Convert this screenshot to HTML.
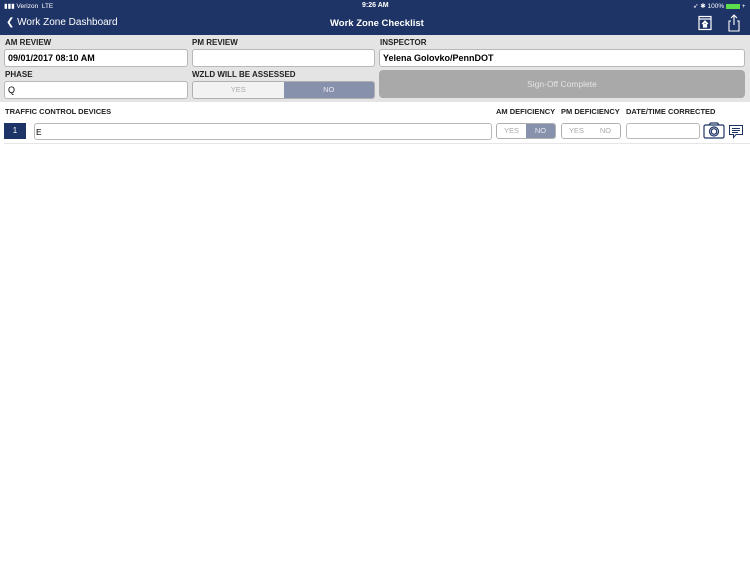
<!DOCTYPE html>
<html><head><meta charset="utf-8"><style>
*{box-sizing:border-box;margin:0;padding:0}
body{width:750px;height:562px;background:#fff;font-family:"Liberation Sans",sans-serif;position:relative;overflow:hidden}
.a{position:absolute}
.nav{left:0;top:0;width:750px;height:35px;background:#1e3466;color:#fff}
.gray{left:0;top:35px;width:750px;height:67px;background:#e4e4e4}
.lbl{font-size:8px;font-weight:bold;color:#222}
.in{background:#fff;border:1px solid #b8b8b8;border-radius:3px;height:18px;font-size:9px;padding:3px 3px;color:#000}
.seg{border:1px solid #b0b0b0;border-radius:3px;overflow:hidden;display:flex;font-size:7.5px;color:#aaa}
.seg div{flex:1;text-align:center;background:#f2f2f2}
.seg .on{background:#8791ac;color:#e8e8f0}
</style></head><body>
<div class="a nav">
  <div class="a" style="left:4px;top:2px;font-size:6.5px">▮▮▮ Verizon&nbsp;&nbsp;LTE</div>
  <div class="a" style="left:362px;top:2px;font-size:7px;font-weight:bold">9:26 AM</div>
  <div class="a" style="left:693px;top:2px;font-size:6.5px">➶ ✱ 100% <span style="display:inline-block;width:14px;height:5px;background:#5ddc4c;vertical-align:middle"></span> +</div>
  <div class="a" style="left:6px;top:17px;font-size:10px">❮ Work Zone Dashboard</div>
  <div class="a" style="left:330px;top:18px;font-size:9.5px;font-weight:bold">Work Zone Checklist</div>
  <svg class="a" style="left:697px;top:15px" width="16" height="16" viewBox="0 0 16 16" fill="none" stroke="#fff" stroke-width="1.2"><rect x="2" y="1.5" width="12" height="13"/><line x1="2" y1="4" x2="14" y2="4"/><path d="M5 9 L8 6 L11 9 M6.5 8.5 V12 H9.5 V8.5" fill="#fff"/></svg>
  <svg class="a" style="left:727px;top:14px" width="14" height="18" viewBox="0 0 14 18" fill="none" stroke="#fff" stroke-width="1.1"><path d="M4 7 H2 V17 H12 V7 H10 M7 11 V1 M4 4 L7 1 L10 4"/></svg>
</div>
<div class="a gray">
  <div class="a lbl" style="left:5px;top:3px">AM REVIEW</div>
  <div class="a lbl" style="left:192px;top:3px">PM REVIEW</div>
  <div class="a lbl" style="left:380px;top:3px">INSPECTOR</div>
  <div class="a in" style="left:4px;top:14px;width:184px;font-weight:bold">09/01/2017 08:10 AM</div>
  <div class="a in" style="left:192px;top:14px;width:183px"></div>
  <div class="a in" style="left:379px;top:14px;width:366px;font-weight:bold">Yelena Golovko/PennDOT</div>
  <div class="a lbl" style="left:5px;top:35px">PHASE</div>
  <div class="a lbl" style="left:192px;top:35px">WZLD WILL BE ASSESSED</div>
  <div class="a in" style="left:4px;top:46px;width:184px">Q</div>
  <div class="a seg" style="left:192px;top:46px;width:183px;height:18px;line-height:16px"><div>YES</div><div class="on">NO</div></div>
  <div class="a" style="left:379px;top:35px;width:366px;height:28px;background:#a9a9a9;border-radius:4px;color:#e4e4e4;font-size:8.5px;text-align:center;line-height:28px">Sign-Off Complete</div>
</div>
<div class="a lbl" style="left:5px;top:107px;font-size:7.5px">TRAFFIC CONTROL DEVICES</div>
<div class="a lbl" style="left:496px;top:107px;font-size:7.5px">AM DEFICIENCY</div>
<div class="a lbl" style="left:561px;top:107px;font-size:7.5px">PM DEFICIENCY</div>
<div class="a lbl" style="left:626px;top:107px;font-size:7.5px">DATE/TIME CORRECTED</div>
<div class="a" style="left:4px;top:123px;width:22px;height:16px;background:#1e3466;color:#fff;font-size:8px;text-align:center;line-height:16px">1</div>
<div class="a in" style="left:34px;top:123px;width:458px;height:17px;padding:3px 1px;font-size:8.5px">E</div>
<div class="a seg" style="left:496px;top:123px;width:60px;height:16px;line-height:14px"><div style="background:#fff">YES</div><div class="on">NO</div></div>
<div class="a seg" style="left:561px;top:123px;width:60px;height:16px;line-height:14px"><div style="background:#fff">YES</div><div style="background:#fff">NO</div></div>
<div class="a" style="left:626px;top:123px;width:74px;height:16px;border:1px solid #bbb;border-radius:3px"></div>
<svg class="a" style="left:703px;top:122px" width="22" height="17" viewBox="0 0 22 17" fill="none" stroke="#1e3466" stroke-width="1.2"><rect x="1" y="3" width="20" height="13" rx="1.5"/><path d="M6 3 L7.5 1 H14.5 L16 3"/><circle cx="11" cy="9.5" r="4.5"/><circle cx="11" cy="9.5" r="2.8"/></svg>
<svg class="a" style="left:728px;top:124px" width="16" height="16" viewBox="0 0 16 16" fill="none" stroke="#1e3466" stroke-width="1"><path d="M1.5 1.5 H14.5 V10.5 H8 L5.5 13.5 V10.5 H1.5 Z"/><line x1="4" y1="4.5" x2="12" y2="4.5"/><line x1="4" y1="6.5" x2="12" y2="6.5"/><line x1="4" y1="8.5" x2="10" y2="8.5"/></svg>
<div class="a" style="left:4px;top:143px;width:746px;height:1px;background:#e6e6e6"></div>
</body></html>
